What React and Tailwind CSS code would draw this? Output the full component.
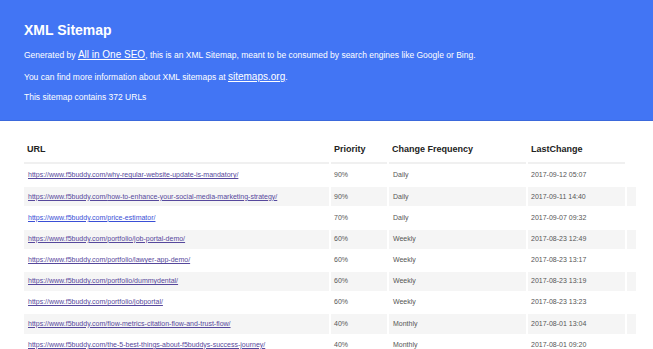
import React from "react";

const rows = [
  ["why-regular-website-update-is-mandatory/", "90%", "Daily", "2017-09-12 05:07"],
  ["how-to-enhance-your-social-media-marketing-strategy/", "90%", "Daily", "2017-09-11 14:40"],
  ["price-estimator/", "70%", "Daily", "2017-09-07 09:32"],
  ["portfolio/job-portal-demo/", "60%", "Weekly", "2017-08-23 12:49"],
  ["portfolio/lawyer-app-demo/", "60%", "Weekly", "2017-08-23 13:17"],
  ["portfolio/dummydental/", "60%", "Weekly", "2017-08-23 13:19"],
  ["portfolio/jobportal/", "60%", "Weekly", "2017-08-23 13:23"],
  ["flow-metrics-citation-flow-and-trust-flow/", "40%", "Monthly", "2017-08-01 13:04"],
  ["the-5-best-things-about-f5buddys-success-journey/", "40%", "Monthly", "2017-08-01 09:20"],
];

export default function App() {
  return (
    <div className="w-[653px] h-[349px] overflow-hidden bg-white font-['Liberation_Sans',Arial,sans-serif]">
      <div className="bg-[#4275f4] border-b border-[#3b69dc] pl-[24px] pt-[22px] pb-[16px] text-white">
        <h1 className="text-[14px] leading-[16px] font-bold">XML Sitemap</h1>
        <p className="mt-[10px] text-[8.5px] leading-[14px]">
          Generated by{" "}
          <a href="#" className="text-[10px] underline text-white">
            All in One SEO
          </a>
          , this is an XML Sitemap, meant to be consumed by search engines like Google or Bing.
        </p>
        <p className="mt-[8px] text-[8.5px] leading-[14px]">
          You can find more information about XML sitemaps at{" "}
          <a href="#" className="text-[10px] underline text-white">
            sitemaps.org
          </a>
          .
        </p>
        <p className="mt-[6px] text-[8.5px] leading-[14px]">This sitemap contains 372 URLs</p>
      </div>

      <table className="ml-[22px] mt-[14px] table-fixed border-separate border-spacing-[2px] w-[616px]">
        <thead>
          <tr className="text-[9px] font-bold text-[#222] text-left">
            <th className="w-[305px] h-[27px] pl-[3px] border-b-2 border-[#f0f0f0]">URL</th>
            <th className="w-[56px] pl-[3px] border-b-2 border-[#f0f0f0]">Priority</th>
            <th className="w-[137px] pl-[3px] border-b-2 border-[#f0f0f0]">Change Frequency</th>
            <th className="w-[97px] pl-[3px] border-b-2 border-[#f0f0f0]">LastChange</th>
            <th className="w-[9px]"></th>
          </tr>
        </thead>
        <tbody>
          {rows.map((r, i) => (
            <tr
              key={i}
              className={`text-[7px] text-[#555] ${i % 2 === 1 ? "bg-[#f5f5f5]" : ""}`}
            >
              <td className="h-[19.2px] pl-[4px] whitespace-nowrap overflow-hidden">
                <a
                  href="#"
                  className={`underline ${i === 2 ? "text-[#3a4fd6]" : "text-[#56489c]"}`}
                >
                  https://www.f5buddy.com/{r[0]}
                </a>
              </td>
              <td className="pl-[3px]">{r[1]}</td>
              <td className="pl-[4px]">{r[2]}</td>
              <td className="pl-[3px] whitespace-nowrap">{r[3]}</td>
              <td></td>
            </tr>
          ))}
        </tbody>
      </table>
    </div>
  );
}
